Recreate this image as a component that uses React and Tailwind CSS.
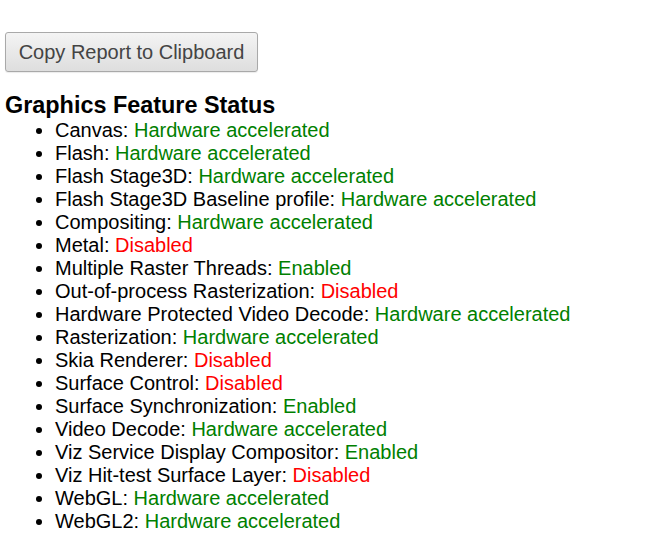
const features = [
  ['Canvas', 'Hardware accelerated', true],
  ['Flash', 'Hardware accelerated', true],
  ['Flash Stage3D', 'Hardware accelerated', true],
  ['Flash Stage3D Baseline profile', 'Hardware accelerated', true],
  ['Compositing', 'Hardware accelerated', true],
  ['Metal', 'Disabled', false],
  ['Multiple Raster Threads', 'Enabled', true],
  ['Out-of-process Rasterization', 'Disabled', false],
  ['Hardware Protected Video Decode', 'Hardware accelerated', true],
  ['Rasterization', 'Hardware accelerated', true],
  ['Skia Renderer', 'Disabled', false],
  ['Surface Control', 'Disabled', false],
  ['Surface Synchronization', 'Enabled', true],
  ['Video Decode', 'Hardware accelerated', true],
  ['Viz Service Display Compositor', 'Enabled', true],
  ['Viz Hit-test Surface Layer', 'Disabled', false],
  ['WebGL', 'Hardware accelerated', true],
  ['WebGL2', 'Hardware accelerated', true],
]

export default function App() {
  return (
    <div className="min-h-screen bg-white pl-[5px] pt-[32px] text-black [font-family:'Liberation_Sans',Arial,sans-serif]">
      <button
        type="button"
        className="block h-[40px] w-[253px] whitespace-nowrap rounded-[3px] border border-[#a9a9a9] bg-gradient-to-b from-[#f4f4f4] to-[#dedede] px-0 text-center text-[20px] leading-none text-[#444] shadow-[0_1px_1px_rgba(0,0,0,0.08)]"
      >
        Copy Report to Clipboard
      </button>

      <h3 className="mt-[20px] text-[23.4px] font-bold leading-[27px]">Graphics Feature Status</h3>
      <ul className="list-disc pl-[50px] text-[20px] leading-[23px]">
        {features.map(([name, status, ok]) => (
          <li key={name}>
            {name}:{' '}
            <span className={ok ? 'text-[#008000]' : 'text-[#ff0000]'}>{status}</span>
          </li>
        ))}
      </ul>
    </div>
  )
}
